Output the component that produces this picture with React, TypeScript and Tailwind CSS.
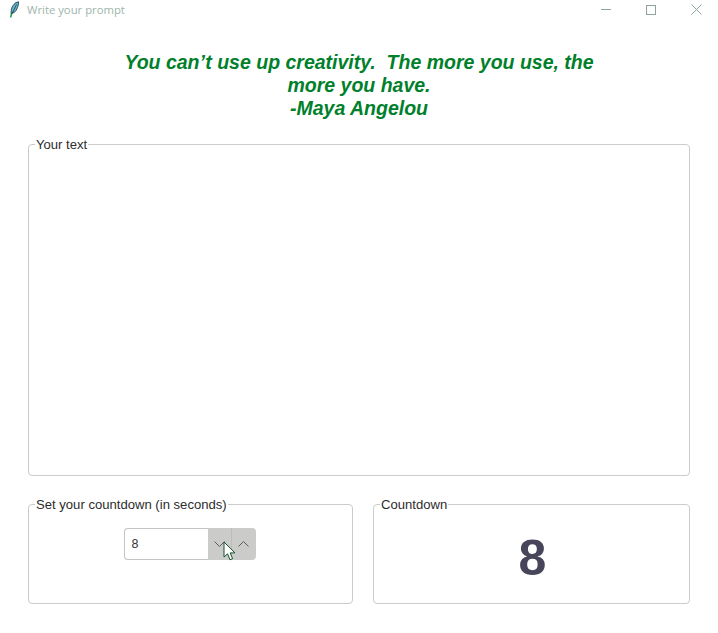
const FONT = "font-['Liberation_Sans',Arial,sans-serif]";

function Feather() {
  return (
    <svg width="12" height="18" viewBox="0 0 12 18" fill="none">
      <path d="M10.5 0.8C7 1.3 4.2 4.5 3.4 8.5L3 12.5L6.2 11.5C8.8 9 10.8 5 10.5 0.8Z" fill="#63b5c9" stroke="#1f3d4a" strokeWidth="0.9" />
      <path d="M8.5 3.5L3.4 14" stroke="#1f3d4a" strokeWidth="0.8" />
      <path d="M3.6 12.5L2.6 16.5" stroke="#0a9a3c" strokeWidth="1.4" />
    </svg>
  );
}

function TitleBar() {
  return (
    <div className="flex h-[19px] items-center justify-between">
      <div className="flex items-center pl-[8px]">
        <Feather />
        <span className="ml-[7px] font-['Open_Sans',sans-serif] text-[11.3px] leading-none text-[#9db5ab]">
          Write your prompt
        </span>
      </div>
      <div className="flex items-center gap-[35px] pr-[16px]">
        <div className="h-px w-[10px] bg-[#8fa39c]" />
        <div className="size-[10px] border border-[#8fa39c]" />
        <svg width="11" height="11" viewBox="0 0 11 11" stroke="#8fa39c" strokeWidth="1">
          <path d="M0.5 0.5L10.5 10.5M10.5 0.5L0.5 10.5" />
        </svg>
      </div>
    </div>
  );
}

function Frame({ label, className, children }: { label: string; className: string; children?: React.ReactNode }) {
  return (
    <fieldset className={`min-w-0 rounded-[4px] border border-[#cbcbcb] px-[6px] ${className}`}>
      <legend className="-mb-px text-[13.1px] leading-[15px] text-[#2c2c2c]">
        <span className="px-px">{label}</span>
      </legend>
      {children}
    </fieldset>
  );
}

function Chevron({ up }: { up?: boolean }) {
  return (
    <svg width="11" height="6" viewBox="0 0 11 6" fill="none" stroke="#5f5a5f" strokeWidth="1">
      <path d={up ? "M0.5 5.5L5.5 0.5L10.5 5.5" : "M0.5 0.5L5.5 5.5L10.5 0.5"} />
    </svg>
  );
}

function Spinner() {
  return (
    <div className="relative flex h-[32px] w-[132px]">
      <div className="flex flex-1 items-center rounded-l-[4px] border border-r-0 border-[#c4c4c4] pl-[7px] text-[12.5px] text-[#333333]">
        8
      </div>
      <div className="flex w-[24px] items-center justify-center border-r border-[#bdbdbb] bg-[#cbcbc9]">
        <Chevron />
      </div>
      <div className="flex w-[24px] items-center justify-center rounded-r-[4px] bg-[#cbcbc9]">
        <Chevron up />
      </div>
      <svg className="absolute left-[99px] top-[13px]" width="14" height="21" viewBox="0 0 14 21">
        <path d="M1 1V16L4.6 12.8L7 18.8L9.6 17.7L7.2 11.9H12Z" fill="#ffffff" stroke="#14532d" strokeWidth="1" />
      </svg>
    </div>
  );
}

export default function App() {
  return (
    <div className={`h-[633px] w-[718px] overflow-hidden bg-white ${FONT}`}>
      <TitleBar />
      <h1 className="mx-auto mt-[32px] w-[500px] text-center text-[19.5px] font-bold italic leading-[23px] text-[#00802b]">
        You can’t use up creativity.&nbsp; The more you use, the
        <br />
        more you have.
        <br />
        -Maya Angelou
      </h1>
      <div className="mt-[17px] px-[28px]">
        <Frame label="Your text" className="h-[339px]" />
        <div className="mt-[21px] flex gap-[20px]">
          <Frame label="Set your countdown (in seconds)" className="h-[107px] w-[325px]">
            <div className="flex justify-center pr-[2px] pt-[17px]">
              <Spinner />
            </div>
          </Frame>
          <Frame label="Countdown" className="h-[107px] w-[317px]">
            <div className="flex justify-center pl-[2px] pt-[16px] text-[50px] font-bold leading-[62px] text-[#47455a]">
              8
            </div>
          </Frame>
        </div>
      </div>
    </div>
  );
}
